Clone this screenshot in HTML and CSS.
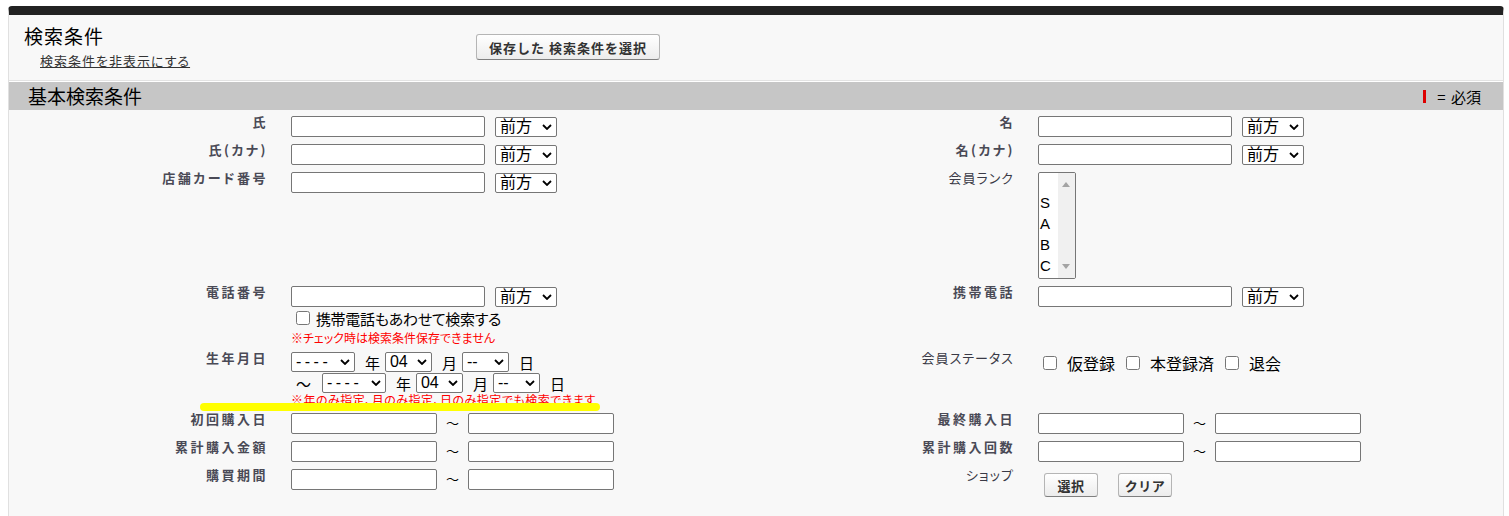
FILE: index.html
```html
<!DOCTYPE html>
<html lang="ja">
  <head>
    <meta charset="UTF-8" />
    <meta name="viewport" content="width=device-width, initial-scale=1.0" />
    <title>検索条件</title>
    <link rel="stylesheet" href="styles.css">
  </head>
  <body>
    <div class="page-block">
      <div class="block-header">
        <div class="block-title">
          <h2>検索条件</h2>
          <a href="#" class="toggle-link">検索条件を非表示にする</a>
        </div>
        <div class="block-buttons">
          <button type="button" class="btn">保存した 検索条件を選択</button>
        </div>
      </div>

      <div class="section-head">
        <h3>基本検索条件</h3>
        <span class="required-legend"><span class="required-mark"></span>= 必須</span>
      </div>

      <div class="detail-list">
        <!-- 氏 / 名 -->
        <div class="label-col">氏</div>
        <div class="data-col">
          <div class="field-line">
            <input type="text" class="text-field">
            <select class="match-select"><option>前方</option><option>部分</option><option>完全</option></select>
          </div>
        </div>
        <div class="label-col">名</div>
        <div class="data-col">
          <div class="field-line">
            <input type="text" class="text-field">
            <select class="match-select"><option>前方</option><option>部分</option><option>完全</option></select>
          </div>
        </div>

        <!-- カナ -->
        <div class="label-col">氏(カナ)</div>
        <div class="data-col">
          <div class="field-line">
            <input type="text" class="text-field">
            <select class="match-select"><option>前方</option><option>部分</option><option>完全</option></select>
          </div>
        </div>
        <div class="label-col">名(カナ)</div>
        <div class="data-col">
          <div class="field-line">
            <input type="text" class="text-field">
            <select class="match-select"><option>前方</option><option>部分</option><option>完全</option></select>
          </div>
        </div>

        <!-- カード番号 / 会員ランク -->
        <div class="label-col">店舗カード番号</div>
        <div class="data-col">
          <div class="field-line">
            <input type="text" class="text-field">
            <select class="match-select"><option>前方</option><option>部分</option><option>完全</option></select>
          </div>
        </div>
        <div class="label-col plain">会員ランク</div>
        <div class="data-col">
          <div class="rank-box">
            <select class="rank-list" multiple size="5">
              <option value=""></option>
              <option>S</option>
              <option>A</option>
              <option>B</option>
              <option>C</option>
            </select>
            <div class="rank-scroll">
              <span class="arrow up"></span>
              <span class="arrow down"></span>
            </div>
          </div>
        </div>

        <!-- 電話 -->
        <div class="label-col">電話番号</div>
        <div class="data-col">
          <div class="field-line">
            <input type="text" class="text-field">
            <select class="match-select"><option>前方</option><option>部分</option><option>完全</option></select>
          </div>
          <label class="sub-check"><input type="checkbox">携帯電話もあわせて検索する</label>
          <div class="note phone-note">※チェック時は検索条件保存できません</div>
        </div>
        <div class="label-col">携帯電話</div>
        <div class="data-col">
          <div class="field-line">
            <input type="text" class="text-field">
            <select class="match-select"><option>前方</option><option>部分</option><option>完全</option></select>
          </div>
        </div>

        <!-- 生年月日 / 会員ステータス -->
        <div class="label-col">生年月日</div>
        <div class="data-col">
          <div class="date-line">
            <select class="ymd-select year"><option>----</option></select>
            <span class="unit">年</span>
            <select class="ymd-select md"><option>04</option></select>
            <span class="unit">月</span>
            <select class="ymd-select md"><option>--</option></select>
            <span class="unit">日</span>
          </div>
          <div class="date-line second">
            <span class="tilde-lead">〜</span>
            <select class="ymd-select year"><option>----</option></select>
            <span class="unit">年</span>
            <select class="ymd-select md"><option>04</option></select>
            <span class="unit">月</span>
            <select class="ymd-select md"><option>--</option></select>
            <span class="unit">日</span>
          </div>
          <div class="note birth-note">
            ※年のみ指定、月のみ指定、日のみ指定でも検索できます
            <span class="highlight"></span>
          </div>
        </div>
        <div class="label-col plain">会員ステータス</div>
        <div class="data-col">
          <div class="status-line">
            <label class="check-item"><input type="checkbox">仮登録</label>
            <label class="check-item"><input type="checkbox">本登録済</label>
            <label class="check-item"><input type="checkbox">退会</label>
          </div>
        </div>

        <!-- 購入日 -->
        <div class="label-col">初回購入日</div>
        <div class="data-col">
          <div class="range-line">
            <input type="text" class="text-field short"><span class="tilde">〜</span><input type="text" class="text-field short">
          </div>
        </div>
        <div class="label-col">最終購入日</div>
        <div class="data-col">
          <div class="range-line">
            <input type="text" class="text-field short"><span class="tilde">〜</span><input type="text" class="text-field short">
          </div>
        </div>

        <!-- 累計 -->
        <div class="label-col">累計購入金額</div>
        <div class="data-col">
          <div class="range-line">
            <input type="text" class="text-field short"><span class="tilde">〜</span><input type="text" class="text-field short">
          </div>
        </div>
        <div class="label-col">累計購入回数</div>
        <div class="data-col">
          <div class="range-line">
            <input type="text" class="text-field short"><span class="tilde">〜</span><input type="text" class="text-field short">
          </div>
        </div>

        <!-- 購買期間 / ショップ -->
        <div class="label-col">購買期間</div>
        <div class="data-col">
          <div class="range-line">
            <input type="text" class="text-field short"><span class="tilde">〜</span><input type="text" class="text-field short">
          </div>
        </div>
        <div class="label-col plain">ショップ</div>
        <div class="data-col">
          <div class="shop-buttons">
            <button type="button" class="btn small">選択</button>
            <button type="button" class="btn small">クリア</button>
          </div>
        </div>
      </div>
    </div>
  </body>
</html>
```

FILE: styles.css
```css
body {
  margin: 6px 5px 0 8px;
  font-family: "Noto Sans CJK JP", "Liberation Sans", sans-serif;
  font-size: 13px;
  color: #000;
  background-color: #fff;
  font-feature-settings: "palt";
}

.page-block {
  background-color: #f8f8f8;
  border-top: 9px solid #222;
  border-left: 1px solid #e0e0e0;
  border-right: 1px solid #e0e0e0;
  border-radius: 4px 4px 0 0;
  min-height: 540px;
}

/* header */
.block-header {
  display: flex;
  height: 65px;
  border-bottom: 1px solid #e3e3e3;
}

.block-title {
  width: 452px;
  padding: 10px 0 0 15px;
}

.block-title h2 {
  margin: 0;
  font-size: 19px;
  font-weight: normal;
  line-height: 22px;
  letter-spacing: 1px;
}

.toggle-link {
  display: inline-block;
  margin: 6px 0 0 16px;
  font-size: 13px;
  line-height: 16px;
  color: #333;
  letter-spacing: 1px;
}

.block-buttons {
  padding-top: 19px;
}

.btn {
  height: 26px;
  padding: 0 12px;
  font-family: inherit;
  font-size: 13px;
  font-weight: bold;
  letter-spacing: 1px;
  color: #333;
  border: 1px solid #b5b5b5;
  border-bottom-color: #7f7f7f;
  border-radius: 3px;
  background: linear-gradient(#fff, #ececec);
  cursor: pointer;
}

.btn.small {
  width: 54px;
  height: 24px;
  padding: 0;
  letter-spacing: 0.5px;
}

/* section */
.section-head {
  display: flex;
  align-items: center;
  justify-content: space-between;
  height: 28px;
  padding: 0 22px 0 19px;
  background-color: #c6c6c6;
  border-top: 1px solid #fff;
}

.section-head h3 {
  margin: 0;
  font-size: 19px;
  font-weight: normal;
  line-height: 28px;
}

.required-legend {
  display: flex;
  align-items: center;
  font-size: 15px;
  word-spacing: 2px;
}

.required-mark {
  width: 3px;
  height: 13px;
  margin-right: 11px;
  background-color: #d00;
}

/* form grid */
.detail-list {
  display: grid;
  grid-template-columns: 18% 32% 18% 32%;
  padding: 3px 0 24px;
}

.label-col {
  padding: 1px 10px 4px 0;
  text-align: right;
  font-weight: bold;
  color: #4a4a56;
  line-height: 16px;
  letter-spacing: 2.5px;
}

.label-col.plain {
  padding-right: 11px;
  font-weight: normal;
  color: #3a3a46;
  letter-spacing: 1px;
}

.data-col {
  padding: 3px 0 4px 13px;
}

.field-line {
  display: flex;
  align-items: center;
  gap: 10px;
}

.text-field {
  width: 194px;
  height: 21px;
  box-sizing: border-box;
  margin: 0;
  padding: 1px 3px;
  border: 1px solid #767676;
  border-radius: 2px;
  background-color: #fff;
}

.text-field.short {
  width: 146px;
}

.match-select,
.ymd-select {
  appearance: none;
  height: 20px;
  margin: 0;
  padding: 0 16px 0 4px;
  font-family: "Liberation Sans", "Noto Sans CJK JP", sans-serif;
  font-size: 16px;
  line-height: 18px;
  color: #000;
  border: 1px solid #767676;
  border-radius: 2px;
  background: #fff url("data:image/svg+xml,%3Csvg xmlns='http://www.w3.org/2000/svg' width='10' height='6' viewBox='0 0 10 6'%3E%3Cpath d='M1 1l4 4 4-4' fill='none' stroke='%23000' stroke-width='1.8'/%3E%3C/svg%3E") no-repeat right 4px center / 10px 6px;
}

.match-select {
  width: 62px;
}

.ymd-select.year {
  width: 64px;
  letter-spacing: 3.5px;
}

.ymd-select.md {
  width: 47px;
}

/* member rank list with its always-on scroll track */
.rank-box {
  display: inline-flex;
  width: 38px;
  height: 107px;
  box-sizing: border-box;
  border: 1px solid #767676;
  border-radius: 2px;
  background-color: #fff;
  overflow: hidden;
}

.rank-list {
  width: 19px;
  height: 105px;
  margin: 0;
  padding: 0;
  border: none;
  outline: none;
  overflow: hidden;
  font-family: "Liberation Sans", "Noto Sans CJK JP", sans-serif;
  font-size: 15px;
}

.rank-list option {
  min-height: 21px;
  box-sizing: border-box;
  padding: 0 1px 2px;
}

.rank-scroll {
  display: flex;
  flex-direction: column;
  justify-content: space-between;
  align-items: center;
  width: 17px;
  padding: 9px 0 9px;
  box-sizing: border-box;
  background-color: #f0f0f0;
}

.arrow {
  width: 0;
  height: 0;
  border-left: 4.5px solid transparent;
  border-right: 4.5px solid transparent;
}

.arrow.up {
  border-bottom: 5px solid #a3a3a3;
}

.arrow.down {
  border-top: 5px solid #a3a3a3;
}

.sub-check {
  display: flex;
  align-items: center;
  height: 22px;
  font-size: 15px;
  letter-spacing: -0.3px;
}

.sub-check input {
  width: 14px;
  height: 14px;
  margin: 0 6px 0 5px;
}

.note {
  color: #f00;
  font-size: 12px;
  line-height: 15px;
}

.phone-note {
  margin-top: 1px;
}

.birth-note {
  position: relative;
  line-height: 13px;
  letter-spacing: 0.5px;
}

.highlight {
  position: absolute;
  left: -91px;
  top: 10px;
  width: 400px;
  height: 8px;
  border-radius: 4px;
  background-color: #ff0;
}

.date-line {
  display: flex;
  align-items: center;
  height: 20px;
}

.date-line.second {
  margin-top: 1px;
}

.unit {
  margin: 0 5px 0 10px;
  font-size: 15px;
}

.tilde-lead {
  margin: 0 11px 0 5px;
  font-size: 15px;
}

.status-line {
  display: flex;
  align-items: center;
  gap: 11px;
  height: 21px;
  padding-left: 5px;
}

.check-item {
  display: flex;
  align-items: center;
  font-size: 16px;
}

.check-item input {
  width: 14px;
  height: 14px;
  margin: 0 10px 0 0;
}

.range-line {
  display: flex;
  align-items: center;
}

.tilde {
  margin: -3px 9px 0 9px;
  font-size: 13px;
}

.shop-buttons {
  display: flex;
  gap: 20px;
  padding: 4px 0 0 6px;
}
```
